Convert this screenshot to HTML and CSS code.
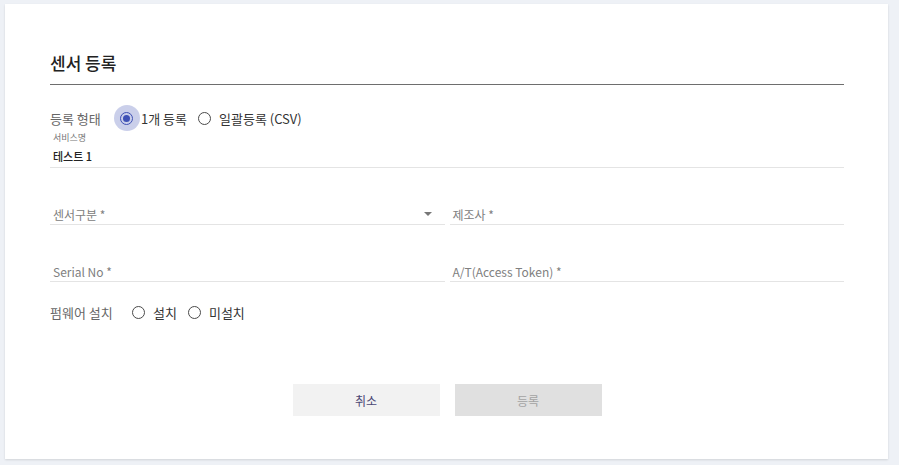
FILE: index.html
```html
<!DOCTYPE html>
<html>

<head>
    <meta charset="utf-8">
    <title>센서 등록</title>
    <link rel="stylesheet" href="styles.css">
</head>

<body>

<div class="card">
    <h2 class="title">센서 등록</h2>

    <div class="radioRow typeRow">
        <span class="rowLabel">등록 형태</span>
        <label class="radio checked"><span class="dot"></span>1개 등록</label>
        <label class="radio"><span class="dot"></span>일괄등록 (CSV)</label>
    </div>

    <div class="field full">
        <span class="small">서비스명</span>
        <span class="value">테스트 1</span>
    </div>

    <div class="fieldRow">
        <div class="field select">
            <span class="hint">센서구분 *</span>
            <span class="arrow"></span>
        </div>
        <div class="field">
            <span class="hint">제조사 *</span>
        </div>
    </div>

    <div class="fieldRow">
        <div class="field">
            <span class="hint">Serial No *</span>
        </div>
        <div class="field">
            <span class="hint">A/T(Access Token) *</span>
        </div>
    </div>

    <div class="radioRow fwRow">
        <span class="rowLabel">펌웨어 설치</span>
        <label class="radio"><span class="dot"></span>설치</label>
        <label class="radio"><span class="dot"></span>미설치</label>
    </div>

    <div class="buttons">
        <button class="btn cancel">취소</button>
        <button class="btn submit" disabled>등록</button>
    </div>
</div>

</body>

</html>
```

FILE: styles.css
```css
html,
body {
    margin: 0;
    padding: 0;
}

body {
    background: #eef1f6;
    padding: 4px 11px 6px 5px;
    font-family: "Noto Sans CJK KR", "Noto Sans", sans-serif;
    color: #333;
}

.card {
    background: #fff;
    height: 455px;
    box-sizing: border-box;
    padding: 0 44px 0 45px;
    box-shadow: 0 1px 2px rgba(0, 0, 0, 0.12);
}

.title {
    margin: 0;
    padding-top: 46px;
    height: 34px;
    line-height: 26px;
    font-size: 17px;
    font-weight: 500;
    color: #222;
    border-bottom: 1.5px solid #6e6e6e;
}

/* radio rows */
.radioRow {
    display: flex;
    align-items: center;
    height: 26px;
    font-size: 13px;
    color: #333;
}

.typeRow {
    margin-top: 20px;
}

.fwRow {
    margin-top: 17px;
}

.rowLabel {
    color: #666;
    width: 70px;
}

.fwRow .rowLabel {
    width: 82px;
}

.radio {
    display: flex;
    align-items: center;
    margin-right: 11px;
}

.dot {
    position: relative;
    width: 11px;
    height: 11px;
    border: 1.5px solid #4a4a4a;
    border-radius: 50%;
    margin-right: 8px;
}

.checked .dot {
    border-color: #3f51b5;
}

.checked .dot::before {
    content: "";
    position: absolute;
    left: -7.5px;
    top: -7.5px;
    width: 26px;
    height: 26px;
    border-radius: 50%;
    background: rgba(63, 81, 181, 0.28);
}

.checked .dot::after {
    content: "";
    position: absolute;
    left: 2px;
    top: 2px;
    width: 7px;
    height: 7px;
    border-radius: 50%;
    background: #3f51b5;
}

/* text fields */
.field {
    display: flex;
    flex-direction: column;
    border-bottom: 1px solid #e4e4e4;
    padding-left: 3px;
}

.full {
    margin-top: 1px;
}

.small {
    font-size: 9px;
    color: #777;
    line-height: 12px;
}

.value {
    font-size: 11px;
    font-weight: 500;
    color: #222;
    line-height: 14px;
    margin-top: 5px;
    padding-bottom: 4px;
}

.fieldRow {
    display: flex;
    gap: 5px;
    margin-top: 37px;
}

.fieldRow + .fieldRow {
    margin-top: 37px;
}

.fieldRow .field {
    flex: 1;
    flex-direction: row;
    align-items: center;
    height: 18px;
    padding-bottom: 1px;
}

.hint {
    font-size: 12px;
    color: #808080;
    flex: 1;
}

.arrow {
    width: 0;
    height: 0;
    border-left: 4px solid transparent;
    border-right: 4px solid transparent;
    border-top: 4px solid #777;
    margin-right: 13px;
}

/* buttons */
.buttons {
    display: flex;
    justify-content: center;
    gap: 15px;
    margin-top: 59px;
}

.btn {
    width: 147px;
    height: 32px;
    border: 0;
    font-family: inherit;
    font-size: 12px;
}

.cancel {
    background: #f2f2f2;
    color: #4b4875;
}

.submit {
    background: #e0e0e0;
    color: #a3a3a3;
}
```
